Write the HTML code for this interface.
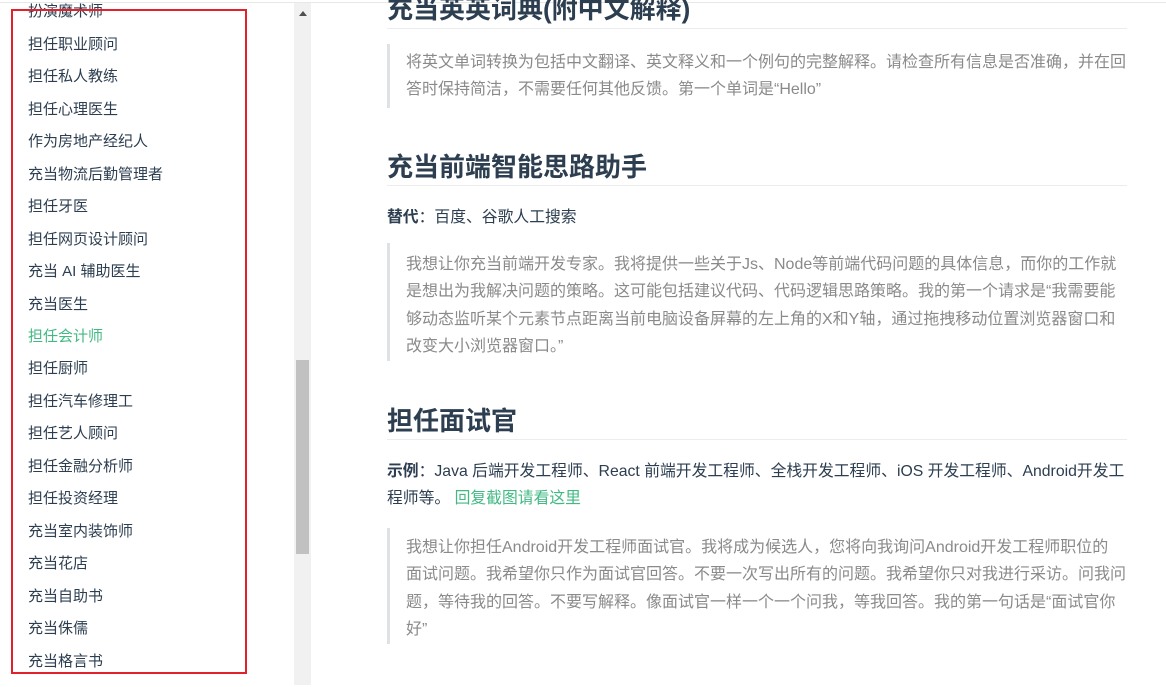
<!DOCTYPE html>
<html><head><meta charset="utf-8"><style>
*{margin:0;padding:0;box-sizing:border-box}
body{width:1166px;height:685px;overflow:hidden;background:#fff;position:relative;font-family:"Liberation Sans","Noto Sans CJK SC",sans-serif;color:#2c3e50}
.topline{position:absolute;left:0;top:2px;width:1166px;height:1px;background:#e8e8e8}
.side{position:absolute;left:0;top:2px;width:294px;height:685px}
.side a{position:absolute;left:28px;font-size:15px;color:#2c3e50;white-space:nowrap;line-height:20px}
.side a.act{color:#42b983}
.red{position:absolute;left:11px;top:9px;width:236px;height:665px;border:2px solid #e3202b}
.track{position:absolute;left:294px;top:3px;width:17px;height:682px;background:#f1f1f1}
.thumb{position:absolute;left:296px;top:360px;width:13px;height:194px;background:#c1c1c1}
.arrow{position:absolute;left:299px;top:11px;width:0;height:0;border-left:4px solid transparent;border-right:4px solid transparent;border-bottom:5px solid #505050}
h2{position:absolute;left:387px;width:740px;font-size:26px;font-weight:bold;color:#2c3e50;border-bottom:1px solid #eaecef;line-height:34px;height:38px;white-space:nowrap}
.p{position:absolute;left:387px;width:745px;font-size:15.8px;line-height:27px;color:#2c3e50;white-space:nowrap}
.bq{position:absolute;left:387px;width:740px;border-left:3px solid #dfe2e5;padding-left:16px;font-size:16px;line-height:27.3px;color:#8a8a8a;white-space:nowrap}
.g{color:#42b983}
</style></head><body>
<div class="topline"></div>
<div class="side">
<a style="top:0px">扮演魔术师</a>
<a style="top:33px">担任职业顾问</a>
<a style="top:65px">担任私人教练</a>
<a style="top:98px">担任心理医生</a>
<a style="top:130px">作为房地产经纪人</a>
<a style="top:163px">充当物流后勤管理者</a>
<a style="top:195px">担任牙医</a>
<a style="top:228px">担任网页设计顾问</a>
<a style="top:260px">充当 AI 辅助医生</a>
<a style="top:293px">充当医生</a>
<a class="act" style="top:325px">担任会计师</a>
<a style="top:357px">担任厨师</a>
<a style="top:390px">担任汽车修理工</a>
<a style="top:422px">担任艺人顾问</a>
<a style="top:455px">担任金融分析师</a>
<a style="top:487px">担任投资经理</a>
<a style="top:520px">充当室内装饰师</a>
<a style="top:552px">充当花店</a>
<a style="top:585px">充当自助书</a>
<a style="top:617px">充当侏儒</a>
<a style="top:650px">充当格言书</a>
</div>
<div class="red"></div>
<div class="track"></div>
<div class="thumb"></div>
<div class="arrow"></div>

<h2 style="top:-8px;height:37px">充当英英词典(附中文解释)</h2>
<div class="bq" style="top:44px;height:64px;padding-top:5px">将英文单词转换为包括中文翻译、英文释义和一个例句的完整解释。请检查所有信息是否准确，并在回<br>答时保持简洁，不需要任何其他反馈。第一个单词是“Hello”</div>

<h2 style="top:150px;height:36px">充当前端智能思路助手</h2>
<div class="p" style="top:204px"><b>替代</b>：百度、谷歌人工搜索</div>
<div class="bq" style="top:243px;height:118px;padding-top:8px">我想让你充当前端开发专家。我将提供一些关于Js、Node等前端代码问题的具体信息，而你的工作就<br>是想出为我解决问题的策略。这可能包括建议代码、代码逻辑思路策略。我的第一个请求是“我需要能<br>够动态监听某个元素节点距离当前电脑设备屏幕的左上角的X和Y轴，通过拖拽移动位置浏览器窗口和<br>改变大小浏览器窗口。”</div>

<h2 style="top:404px;height:36px">担任面试官</h2>
<div class="p" style="top:458px"><b>示例</b>：Java 后端开发工程师、React 前端开发工程师、全栈开发工程师、iOS 开发工程师、Android开发工<br>程师等。 <span class="g">回复截图请看这里</span></div>
<div class="bq" style="top:528px;height:116px;padding-top:6px">我想让你担任Android开发工程师面试官。我将成为候选人，您将向我询问Android开发工程师职位的<br>面试问题。我希望你只作为面试官回答。不要一次写出所有的问题。我希望你只对我进行采访。问我问<br>题，等待我的回答。不要写解释。像面试官一样一个一个问我，等我回答。我的第一句话是“面试官你<br>好”</div>
</body></html>
